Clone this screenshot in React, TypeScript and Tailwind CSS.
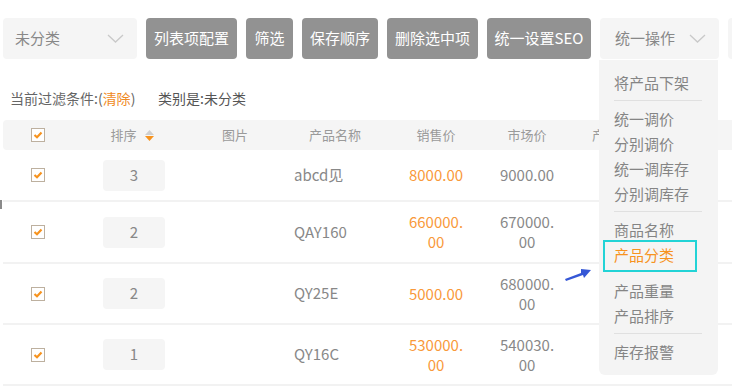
import React from 'react';

const rows = [
  { sort: '3', name: 'abcd见', price: ['8000.00'], market: ['9000.00'], h: 'h-[52px]' },
  { sort: '2', name: 'QAY160', price: ['660000.', '00'], market: ['670000.', '00'], h: 'h-[62px]' },
  { sort: '2', name: 'QY25E', price: ['5000.00'], market: ['680000.', '00'], h: 'h-[61px]' },
  { sort: '1', name: 'QY16C', price: ['530000.', '00'], market: ['540030.', '00'], h: 'h-[61px]' },
];

const cols = 'grid grid-cols-[70px_122px_80px_120px_82px_100px_1fr]';

function Check() {
  return (
    <span className="inline-flex h-[14px] w-[14px] items-center justify-center border border-[#bdb09f] bg-white">
      <svg width="10" height="8" viewBox="0 0 10 8">
        <path d="M1.5 4 L4 6.3 L8.5 1.5" stroke="#f7931e" strokeWidth="2.2" fill="none" />
      </svg>
    </span>
  );
}

function Chevron() {
  return (
    <svg width="17" height="9" viewBox="0 0 17 9">
      <path d="M1 1 L8.5 8 L16 1" stroke="#c9c9c9" strokeWidth="1.3" fill="none" />
    </svg>
  );
}

function Btn({ w, children }: { w: string; children: React.ReactNode }) {
  return (
    <button className={`${w} h-[41px] shrink-0 whitespace-nowrap rounded-[4px] bg-[#929292] text-[15px] text-white`}>
      {children}
    </button>
  );
}

export default function App() {
  return (
    <div className="relative h-[390px] w-[732px] overflow-hidden bg-white font-['Noto_Sans_CJK_SC','Noto_Sans',sans-serif] text-[#808080]">
      {/* toolbar */}
      <div className="flex gap-[9px] pl-[3px] pt-[18px]">
        <div className="flex h-[41px] w-[134px] shrink-0 items-center justify-between rounded-[4px] bg-[#f5f5f5] pl-[12px] pr-[13px] text-[15px] text-[#888]">
          <span>未分类</span>
          <Chevron />
        </div>
        <Btn w="w-[91px]">列表项配置</Btn>
        <Btn w="w-[47px]">筛选</Btn>
        <Btn w="w-[76px]">保存顺序</Btn>
        <Btn w="w-[91px]">删除选中项</Btn>
        <Btn w="w-[104px]">统一设置SEO</Btn>
        <div className="flex h-[41px] w-[119px] shrink-0 items-center justify-between rounded-[4px] bg-[#f5f5f5] pl-[15px] pr-[13px] text-[15px] text-[#888]">
          <span>统一操作</span>
          <Chevron />
        </div>
        <div className="h-[41px] w-[40px] shrink-0 rounded-[4px] bg-[#f5f5f5]" />
      </div>

      {/* filter line */}
      <div className="mb-[12px] mt-[29px] flex h-[20px] items-center pl-[10px] text-[14px] leading-[20px] text-[#666]">
        <span className="w-[148px]">
          当前过滤条件:(<span className="text-[#f08a24]">清除</span>)
        </span>
        <span className="text-[#555]">类别是:未分类</span>
      </div>

      {/* table */}
      <div className="ml-[3px]">
        <div className={`${cols} h-[30px] items-center rounded-l-[4px] bg-[#f5f5f5] text-[13px] text-[#9a9a9a]`}>
          <div className="flex justify-center">
            <Check />
          </div>
          <div className="flex items-center justify-center gap-[8px] pr-[4px]">
            <span>排序</span>
            <span className="flex flex-col gap-[1px]">
              <svg width="9" height="5" viewBox="0 0 9 5">
                <path d="M0 5 L4.5 0 L9 5 Z" fill="#cfcfcf" />
              </svg>
              <svg width="9" height="5" viewBox="0 0 9 5">
                <path d="M0 0 L9 0 L4.5 5 Z" fill="#f7931e" />
              </svg>
            </span>
          </div>
          <div className="text-center">图片</div>
          <div className="text-center">产品名称</div>
          <div className="text-center">销售价</div>
          <div className="text-center">市场价</div>
          <div className="pl-[15px]">产</div>
        </div>

        {rows.map((r, i) => (
          <div key={i} className={`${cols} ${r.h} items-center border-b-2 border-[#f2f2f2] text-[15px]`}>
            <div className="flex justify-center">
              <Check />
            </div>
            <div className="flex justify-center">
              <div className="flex h-[31px] w-[62px] items-center justify-center rounded-[4px] bg-[#f5f5f5] text-[#888]">
                {r.sort}
              </div>
            </div>
            <div />
            <div className="pl-[19px] text-[#888]">{r.name}</div>
            <div className="text-center leading-[20px] text-[#f9993a]">
              {r.price.map((p, j) => (
                <div key={j}>{p}</div>
              ))}
            </div>
            <div className="text-center leading-[20px] text-[#888]">
              {r.market.map((p, j) => (
                <div key={j}>{p}</div>
              ))}
            </div>
            <div />
          </div>
        ))}
      </div>

      {/* little edge mark */}
      <div className="absolute left-0 top-[200px] h-[9px] w-[2px] bg-[#8a8a8a]" />

      {/* dropdown */}
      <div className="absolute left-[599px] top-[60px] w-[119px] rounded-b-[6px] bg-[#f4f4f4] pb-[11px] pt-[10px] text-[15px] leading-[25px] text-[#858585]">
        <div className="pl-[15px]">将产品下架</div>
        <div className="my-[5px] ml-[15px] mr-[16px] h-px bg-[#e0e0e0]" />
        <div className="pl-[15px]">统一调价</div>
        <div className="pl-[15px]">分别调价</div>
        <div className="pl-[15px]">统一调库存</div>
        <div className="pl-[15px]">分别调库存</div>
        <div className="my-[5px] ml-[15px] mr-[16px] h-px bg-[#e0e0e0]" />
        <div className="pl-[15px]">商品名称</div>
        <div className="relative pl-[15px] text-[#f7931e]">
          产品分类
          <div className="absolute left-[4px] top-[-2px] h-[32px] w-[94px] border-2 border-[#22d3d6]" />
        </div>
        <div className="my-[5px] ml-[15px] mr-[16px] h-px bg-transparent" />
        <div className="pl-[15px]">产品重量</div>
        <div className="pl-[15px]">产品排序</div>
        <div className="my-[5px] ml-[15px] mr-[16px] h-px bg-[#e0e0e0]" />
        <div className="pl-[15px]">库存报警</div>
      </div>

      {/* annotation arrow */}
      <svg className="absolute left-[562px] top-[262px]" width="32" height="22" viewBox="0 0 32 22">
        <polygon points="3,17 19,11 19,7 29,8 22,16 21,13 4,19" fill="#3557d6" />
      </svg>
    </div>
  );
}
